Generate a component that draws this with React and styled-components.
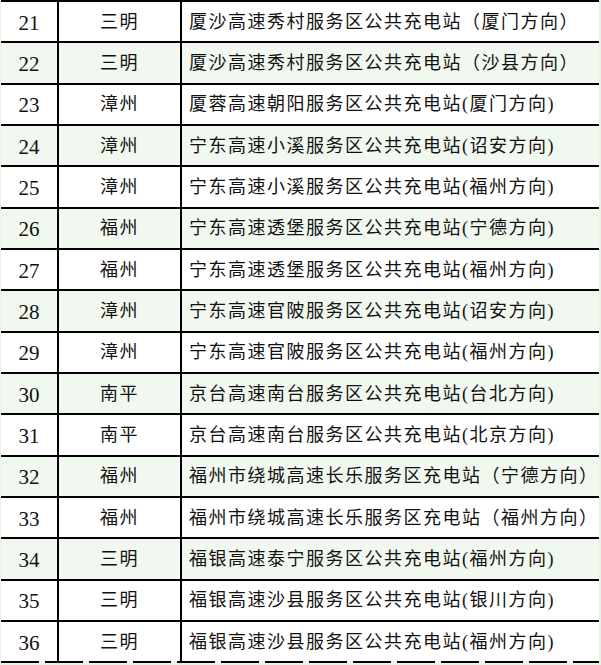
import React from "react"
import styled, {createGlobalStyle} from "styled-components"

const rows = [
  {no: 21, city: "三明", name: "厦沙高速秀村服务区公共充电站（厦门方向）"},
  {no: 22, city: "三明", name: "厦沙高速秀村服务区公共充电站（沙县方向）"},
  {no: 23, city: "漳州", name: "厦蓉高速朝阳服务区公共充电站(厦门方向)"},
  {no: 24, city: "漳州", name: "宁东高速小溪服务区公共充电站(诏安方向)"},
  {no: 25, city: "漳州", name: "宁东高速小溪服务区公共充电站(福州方向)"},
  {no: 26, city: "福州", name: "宁东高速透堡服务区公共充电站(宁德方向)"},
  {no: 27, city: "福州", name: "宁东高速透堡服务区公共充电站(福州方向)"},
  {no: 28, city: "漳州", name: "宁东高速官陂服务区公共充电站(诏安方向)"},
  {no: 29, city: "漳州", name: "宁东高速官陂服务区公共充电站(福州方向)"},
  {no: 30, city: "南平", name: "京台高速南台服务区公共充电站(台北方向)"},
  {no: 31, city: "南平", name: "京台高速南台服务区公共充电站(北京方向)"},
  {no: 32, city: "福州", name: "福州市绕城高速长乐服务区充电站（宁德方向）"},
  {no: 33, city: "福州", name: "福州市绕城高速长乐服务区充电站（福州方向）"},
  {no: 34, city: "三明", name: "福银高速泰宁服务区公共充电站(福州方向)"},
  {no: 35, city: "三明", name: "福银高速沙县服务区公共充电站(银川方向)"},
  {no: 36, city: "三明", name: "福银高速沙县服务区公共充电站(福州方向)"},
]

// rows shaded green in the source sheet
const shaded = new Set([22, 24, 26, 28, 30, 32, 34])

const App = () => (
  <>
    <GlobalStyle />
    <Sheet>
      {rows.map((row) => (
        <Row key={row.no} isShaded={shaded.has(row.no)}>
          <NumberCell>{row.no}</NumberCell>
          <Cell isCenter hasRule>{row.city}</Cell>
          <Cell hasRule>{row.name}</Cell>
        </Row>
      ))}
      <CutRule />
    </Sheet>
  </>
)

const GlobalStyle = createGlobalStyle`
  html, body {
    margin: 0;
    padding: 0;
    background: #ffffff;
  }
`

const Sheet = styled.div`
  width: 601px;
  height: 665px;
  overflow: hidden;
  box-sizing: border-box;
  padding: 0 2px 0 1px;
  background: #e9f3e6;
  display: flex;
  flex-direction: column;
  font-family: "Liberation Serif", "Noto Sans CJK SC", serif;
  font-size: 18px;
  color: #111;
`

const Row = styled(({isShaded, ...props}) => <div {...props} />)`
  display: grid;
  grid-template-columns: 56px 123px 419px;
  height: 41.333px;
  flex: none;
  box-sizing: border-box;
  border-top: 2px solid #000;
  background: ${(props) => (props.isShaded ? "#f1f8ef" : "#ffffff")};
`

const Cell = styled(({isCenter, hasRule, ...props}) => <div {...props} />)`
  display: flex;
  align-items: center;
  justify-content: ${(props) => (props.isCenter ? "center" : "flex-start")};
  box-sizing: border-box;
  padding-left: ${(props) => (props.isCenter ? 0 : 7)}px;
  border-left: ${(props) => (props.hasRule ? "2px solid #000" : "none")};
  letter-spacing: 1.5px;
  line-height: 1;
  white-space: nowrap;
`

const NumberCell = styled.div`
  display: flex;
  align-items: center;
  justify-content: center;
  padding-top: 3px;
  font-size: 21px;
  line-height: 1;
`

const CutRule = styled.div`
  height: 2px;
  flex: none;
  background: repeating-linear-gradient(
    90deg,
    #000 0 38px,
    transparent 38px 44px
  );
`

export default App
